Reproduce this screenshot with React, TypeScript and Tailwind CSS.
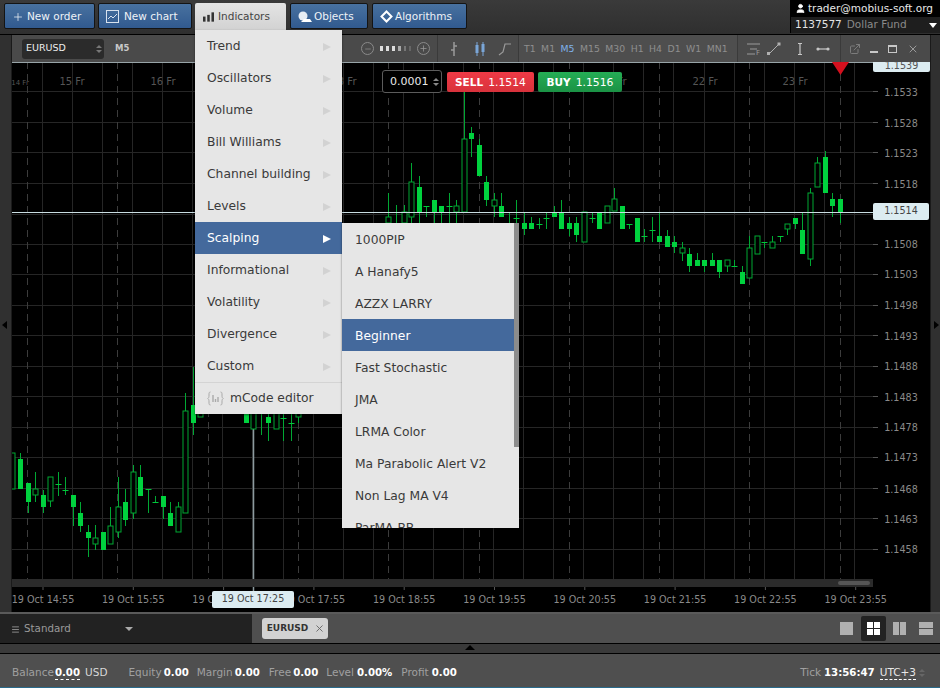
import { Plus, X, ExternalLink, Minus, User, Menu } from 'lucide-react';

const font = "font-['DejaVu_Sans',sans-serif]";

// i, high, low, top, bottom, kind (f = filled, h = hollow, d = doji)
type Candle = [number, number, number, number, number, string];
const candles: Candle[] = [
  [-1, 453, 489, 453, 489, 'h'], [0, 453, 489, 459, 489, 'f'], [1, 483, 513, 483, 502, 'f'], [2, 472, 502, 489, 495, 'h'],
  [3, 490, 513, 495, 507, 'f'], [4, 477, 507, 477, 501, 'h'], [5, 472, 496, 484, 484, 'd'], [6, 477, 495, 490, 490, 'd'],
  [7, 495, 526, 495, 507, 'f'], [8, 502, 532, 513, 526, 'f'], [9, 525, 557, 532, 538, 'f'], [10, 525, 550, 538, 544, 'h'],
  [11, 532, 550, 532, 550, 'f'], [12, 507, 544, 526, 544, 'h'], [13, 477, 538, 507, 532, 'h'], [14, 489, 526, 502, 520, 'f'],
  [15, 465, 519, 472, 513, 'h'], [16, 465, 496, 477, 496, 'f'], [17, 489, 513, 489, 489, 'd'], [18, 496, 503, 502, 502, 'd'],
  [19, 496, 519, 496, 507, 'f'], [20, 502, 526, 513, 526, 'f'], [21, 502, 532, 507, 532, 'h'], [22, 393, 513, 411, 513, 'h'],
  [23, 367, 435, 405, 423, 'f'], [24, 400, 417, 413, 417, 'h'],
  [30, 405, 423, 405, 423, 'f'], [31, 400, 429, 405, 429, 'h'], [32, 400, 435, 405, 418, 'd'], [33, 405, 441, 417, 423, 'f'],
  [34, 400, 429, 405, 429, 'h'], [35, 400, 441, 418, 418, 'd'], [36, 400, 441, 423, 423, 'd'], [37, 400, 423, 405, 417, 'h'],
  [49, 193, 223, 217, 223, 'h'], [50, 205, 223, 223, 223, 'd'], [51, 205, 223, 212, 223, 'h'], [52, 163, 223, 182, 217, 'h'],
  [53, 176, 223, 187, 212, 'f'], [54, 206, 217, 206, 206, 'd'], [55, 200, 223, 200, 212, 'f'], [56, 206, 223, 206, 212, 'f'],
  [57, 193, 223, 206, 206, 'd'], [58, 200, 223, 206, 212, 'h'], [59, 72, 212, 139, 212, 'h'], [60, 127, 157, 133, 139, 'f'],
  [61, 139, 176, 145, 176, 'f'], [62, 176, 206, 182, 200, 'f'], [63, 193, 217, 200, 206, 'h'], [64, 193, 217, 206, 217, 'f'],
  [65, 212, 223, 212, 212, 'd'], [66, 200, 223, 218, 218, 'd'], [67, 212, 235, 223, 229, 'f'], [68, 217, 229, 223, 229, 'f'],
  [69, 218, 229, 224, 224, 'd'], [70, 212, 229, 218, 218, 'd'], [71, 206, 217, 212, 217, 'f'], [72, 200, 229, 212, 229, 'f'],
  [73, 217, 236, 223, 229, 'f'], [74, 217, 242, 223, 235, 'f'], [75, 212, 242, 212, 242, 'h'], [76, 212, 223, 218, 218, 'd'],
  [77, 212, 229, 212, 229, 'f'], [78, 206, 223, 206, 223, 'h'], [79, 188, 211, 199, 211, 'h'], [80, 206, 229, 206, 229, 'f'],
  [81, 224, 229, 224, 224, 'd'], [82, 218, 242, 218, 242, 'f'], [83, 229, 242, 236, 236, 'd'], [84, 217, 242, 230, 230, 'd'],
  [85, 212, 242, 236, 242, 'f'], [86, 230, 247, 236, 247, 'f'], [87, 236, 253, 242, 247, 'f'], [88, 242, 261, 248, 253, 'h'],
  [89, 248, 272, 254, 266, 'f'], [90, 253, 266, 260, 266, 'f'], [91, 260, 272, 260, 266, 'f'], [92, 253, 266, 260, 266, 'f'],
  [93, 260, 278, 260, 272, 'f'], [94, 260, 272, 260, 266, 'h'], [95, 260, 266, 266, 266, 'd'], [96, 266, 284, 272, 284, 'f'],
  [97, 236, 278, 248, 278, 'h'], [98, 236, 254, 236, 254, 'h'], [99, 242, 248, 242, 242, 'd'], [100, 236, 248, 242, 248, 'h'],
  [101, 236, 242, 236, 236, 'd'], [102, 224, 235, 224, 229, 'h'], [103, 218, 229, 218, 224, 'f'], [104, 212, 254, 230, 254, 'f'],
  [105, 188, 266, 193, 259, 'h'], [106, 157, 187, 163, 187, 'h'], [107, 151, 193, 157, 193, 'f'], [108, 193, 217, 199, 206, 'f'],
  [109, 199, 223, 199, 212, 'f'],
];

const prices: [string, number][] = [
  ['1.1533', 92], ['1.1528', 123], ['1.1523', 153], ['1.1518', 184], ['1.1508', 244], ['1.1503', 274], ['1.1498', 305], ['1.1493', 336],
  ['1.1488', 366], ['1.1483', 397], ['1.1478', 427], ['1.1473', 457], ['1.1468', 489], ['1.1463', 519], ['1.1458', 549],
];
const times = ['14:55', '15:55', '16:55', '17:55', '18:55', '19:55', '20:55', '21:55', '22:55', '23:55'];
const dayLabels: [string, number, number][] = [['14 Fr', 20, 7], ['15 Fr', 72, 10], ['16 Fr', 163, 10], ['18 Fr', 344, 10], ['21 Fr', 614, 10], ['22 Fr', 705, 10], ['23 Fr', 795, 10]];
const tfs = ['T1', 'M1', 'M5', 'M15', 'M30', 'H1', 'H4', 'D1', 'W1', 'MN1'];
const indicators = ['Trend', 'Oscillators', 'Volume', 'Bill Williams', 'Channel building', 'Levels', 'Scalping', 'Informational', 'Volatility', 'Divergence', 'Custom'];
const scalping = ['1000PIP', 'A Hanafy5', 'AZZX LARRY', 'Beginner', 'Fast Stochastic', 'JMA', 'LRMA Color', 'Ma Parabolic Alert V2', 'Non Lag MA V4', 'ParMA BB'];

const Chart = () => (
  <svg width="918" height="550" viewBox="12 62 918 550" className="block">
    <rect x="12" y="62" width="918" height="550" fill="#000" />
    {Array.from({ length: 28 }, (_, k) => Math.round(42 + k * 30.07) + 0.5).map((x) => (
      <line key={x} x1={x} x2={x} y1="62" y2="579" stroke="#262626" strokeWidth="1" />
    ))}
    {[91, 122, 152, 183, 214, 244, 274, 305, 335, 366, 396, 427, 457, 488, 518, 549].map((y) => (
      <g key={y}>
        <line x1="12" x2="873" y1={y + 0.5} y2={y + 0.5} stroke="#262626" strokeWidth="1" />
        <line x1="873" x2="878" y1={y + 0.5} y2={y + 0.5} stroke="#555" strokeWidth="1" />
      </g>
    ))}
    {Array.from({ length: 10 }, (_, k) => Math.round(27 + k * 90.3) + 0.5).map((x) => (
      <line key={x} x1={x} x2={x} y1="62" y2="579" stroke="#3c3c3c" strokeWidth="1" strokeDasharray="7 5" />
    ))}
    {dayLabels.map(([d, x, size]) => (
      <text key={d} x={x} y="85" textAnchor="middle" fontSize={size} fill="#555" fontFamily="DejaVu Sans">{d}</text>
    ))}
    <line x1="12" x2="873" y1="62.5" y2="62.5" stroke="#98a4a8" />
    <line x1="253.5" x2="253.5" y1="62" y2="592" stroke="#8c9a9e" strokeWidth="1.5" />
    {candles.map(([i, hi, lo, top, bot, kind]) => {
      const x = Math.round(20 + i * 7.52) + 0.5;
      return (
        <g key={i}>
          <line x1={x} x2={x} y1={hi} y2={lo} stroke="#00a833" />
          {kind === 'f' && <rect x={x - 2.5} y={top} width="5" height={bot - top} fill="#00d23e" />}
          {kind === 'h' && <rect x={x - 2.5} y={top} width="5" height={bot - top} fill="#000" stroke="#00a833" />}
          {kind === 'd' && <line x1={x - 3} x2={x + 3} y1={top + 0.5} y2={top + 0.5} stroke="#00c83a" />}
        </g>
      );
    })}
    <line x1="12" x2="873" y1="212.5" y2="212.5" stroke="#c9dde2" strokeWidth="1" />
    <polygon points="832,62 849,62 840.5,75" fill="#d4101e" />
    <rect x="12" y="579" width="861" height="8" fill="#2b2b2b" />
    <rect x="838" y="581" width="32" height="4" rx="2" fill="#555" />
    {times.map((t, k) => (
      <g key={t}>
        <line x1={43 + k * 90.3} x2={43 + k * 90.3} y1="587" y2="590" stroke="#555" />
        <text x={43 + k * 90.3} y="603" textAnchor="middle" fontSize="9.6" fill="#8a8a8a" fontFamily="DejaVu Sans">19 Oct {t}</text>
      </g>
    ))}
    {prices.map(([p, y]) => (
      <text key={p} x="901" y={y + 3.5} textAnchor="middle" fontSize="9.6" fill="#8a8a8a" fontFamily="DejaVu Sans">{p}</text>
    ))}
  </svg>
);

const NavButton = ({ w, icon, label, gap }: { w: string; icon: React.ReactNode; label: string; gap: string }) => (
  <div className={`flex h-[26px] items-center rounded-[2px] border border-[#141414] bg-linear-to-b from-[#48719f] to-[#315a8f] pt-px text-[10.5px] text-[#eef2f6] ${w}`}>
    {icon}
    <span className={gap}>{label}</span>
  </div>
);

const Sep = () => <div className="h-full w-px bg-[#3a3a3a]" />;

const CandleIcon = () => (
  <svg width="12" height="16" viewBox="0 0 12 16">
    <path d="M3 1v14M9 1v14" stroke="#7aa6d8" />
    <rect x="1.5" y="4" width="3" height="8" fill="#7aa6d8" />
    <rect x="7.5" y="3" width="3" height="8" fill="#7aa6d8" />
  </svg>
);

export default function App() {
  return (
    <div className={`relative flex h-[688px] w-[940px] flex-col overflow-hidden bg-[#333] ${font}`}>
      {/* Top bar */}
      <header className="flex h-[34px] items-start bg-linear-to-b from-[#3a3a3a] to-[#2f2f2f] pl-1">
        <div className="mt-[3px] flex gap-[3px]">
          <NavButton w="w-[91px] pl-[7px]" gap="ml-[3px]" label="New order" icon={<Plus size={12} color="#eef2f6" strokeWidth={1.5} />} />
          <NavButton w="w-[94px] pl-[7px]" gap="ml-[5px]" label="New chart" icon={
            <svg width="13" height="13" viewBox="0 0 13 13" fill="none" stroke="#d8e2ee"><rect x="0.5" y="0.5" width="12" height="12" /><path d="M2 9l3-3 2 2 4-4" /></svg>
          } />
          <div className="w-[91px] shrink-0" />
          <NavButton w="w-[78px] ml-px pl-[7px]" gap="ml-[2px]" label="Objects" icon={
            <svg width="14" height="13" viewBox="0 0 14 13"><circle cx="5" cy="6" r="4.5" fill="#e8eef4" /><path d="M3 12l3-3h6l2 3z" fill="#fff" /></svg>
          } />
          <NavButton w="w-[95px] ml-px pl-[7px]" gap="ml-[2px]" label="Algorithms" icon={
            <svg width="13" height="13" viewBox="0 0 13 13" fill="none" stroke="#fff" strokeWidth="2"><path d="M6.5 1.5l5 5-5 5-5-5z" /></svg>
          } />
        </div>
        <div className="ml-auto flex h-[33px] w-[150px] flex-col bg-black text-[11px]">
          <div className="flex h-[17px] items-center justify-end gap-[2px] pr-[7px] text-[#e8e8e8]">
            <User size={11} fill="#fff" color="#fff" />
            <span className="text-[10.5px]">trader@mobius-soft.org</span>
          </div>
          <div className="ml-px flex h-[16px] items-center bg-[#1e1e1e] pl-1 text-[10.5px]">
            <span className="text-[#e4e4e4]">1137577</span>
            <span className="ml-[5px] text-[#8a8a8a]">Dollar Fund</span>
            <span className="ml-auto mr-[3px] h-0 w-0 border-x-[4px] border-t-[5px] border-x-transparent border-t-white" />
          </div>
        </div>
      </header>
      <div className="h-px bg-black" />

      <div className="flex h-[577px]">
        <div className="relative w-[12px] border-r border-[#1a1a1a] bg-[#303030]">
          <span className="absolute left-[2px] top-[286px] h-0 w-0 border-y-[4px] border-r-[5px] border-y-transparent border-r-black" />
        </div>

        <div className="relative w-[918px]">
          {/* Chart toolbar */}
          <div className="flex h-[27px] items-center bg-[#4a4a4a] text-[9.3px] text-[#8e8e8e]">
            <div className="flex h-full w-[343px] items-center pl-[10px]">
              <div className="flex h-[20px] w-[82px] items-center justify-between rounded-[3px] bg-[#2b2b2b] pl-[4px] pr-[2px] text-[9.5px] text-[#eee]">
                EURUSD
                <span className="flex flex-col gap-[2px]">
                  <span className="h-0 w-0 border-x-[3px] border-b-[3px] border-x-transparent border-b-[#777]" />
                  <span className="h-0 w-0 border-x-[3px] border-t-[3px] border-x-transparent border-t-[#777]" />
                </span>
              </div>
              <span className="ml-[11px] text-[8.5px] font-bold text-[#c8c8c8]">M5</span>
            </div>
            <div className="flex h-full w-[82px] items-center pl-[6px]">
              <span className="flex h-[13px] w-[13px] items-center justify-center rounded-full border border-[#8a8a8a]"><Minus size={8} color="#999" /></span>
              <span className="mx-[6px] flex h-[6px] w-[31px] items-center gap-[3px]">
                <i className="h-[5px] w-[3px] bg-[#ddd]" /><i className="h-[5px] w-[3px] bg-[#ddd]" /><i className="h-[5px] w-[3px] bg-[#ddd]" /><i className="h-[5px] w-[3px] bg-[#aaa]" /><i className="h-[5px] w-[2px] bg-[#777]" /><i className="h-[5px] w-[2px] bg-[#666]" />
              </span>
              <span className="flex h-[13px] w-[13px] items-center justify-center rounded-full border border-[#8a8a8a]"><Plus size={9} color="#999" /></span>
            </div>
            <Sep />
            <div className="flex h-full w-[80px] items-center pl-[11px]">
              <svg width="10" height="16" viewBox="0 0 10 16" stroke="#9a9a9a" strokeWidth="1.5" fill="none"><path d="M5 1v14M2 9h3M5 5h3" /></svg>
              <span className="ml-[15px] flex"><CandleIcon /></span>
              <span className="ml-[12px] flex">
                <svg width="14" height="14" viewBox="0 0 14 14" stroke="#9a9a9a" strokeWidth="1.2" fill="none"><path d="M1 13l4-3 2-8h6" /></svg>
              </span>
            </div>
            <Sep />
            <div className="flex h-full w-[218px] items-center gap-[5.5px] bg-[#4e4e4e] pl-[5px]">
              {tfs.map((t) => (
                <span key={t} className={t === 'M5' ? 'text-[#7fb2ea]' : ''}>{t}</span>
              ))}
            </div>
            <Sep />
            <div className="flex h-full w-[102px] items-center pl-[9px]">
              <svg width="14" height="14" viewBox="0 0 14 14" stroke="#9a9a9a" fill="none"><path d="M0 2h13M3 7h7M0 12h8" /><text x="9" y="13" fontSize="7" fill="#9a9a9a" stroke="none">F</text></svg>
              <span className="ml-[6px] flex">
                <svg width="14" height="14" viewBox="0 0 14 14" stroke="#b0b0b0" fill="none"><path d="M2 12L12 2" /><rect x="0.5" y="10.5" width="2" height="2" fill="#b0b0b0" /><rect x="11" y="1" width="2" height="2" fill="#b0b0b0" /></svg>
              </span>
              <span className="ml-[15px] flex">
                <svg width="8" height="14" viewBox="0 0 8 14" stroke="#c8c8c8" fill="none" strokeWidth="1.2"><path d="M4 2v10M2 1.5h4M2 12.5h4" /></svg>
              </span>
              <span className="ml-[12px] flex">
                <svg width="14" height="8" viewBox="0 0 14 8" stroke="#c8c8c8" fill="none" strokeWidth="1.2"><path d="M1 4h12" /><circle cx="2" cy="4" r="1" fill="#c8c8c8" /><circle cx="12" cy="4" r="1" fill="#c8c8c8" /></svg>
              </span>
            </div>
            <Sep />
            <div className="flex h-full flex-1 items-center gap-[8px] pl-[8px]">
              <ExternalLink size={12} color="#7c7c7c" />
              <span className="ml-px mt-[6px] h-[2px] w-[8px] bg-[#c8c8c8]" />
              <span className="ml-[2px] h-[8px] w-[9px] border border-t-2 border-[#c8c8c8]" />
              <X size={12} color="#9a9a9a" className="ml-[2px]" />
            </div>
          </div>

          <Chart />

          {/* Chart overlays */}
          <div className="absolute left-[370px] top-[35px] flex h-[23px] w-[60px] items-center justify-between rounded-[3px] border border-[#5c5c5c] bg-black pl-[7px] pr-[2px] pt-px text-[11px] text-[#e8e8e8]">
            0.0001
            <span className="flex flex-col gap-[2px]">
              <span className="h-0 w-0 border-x-[3px] border-b-[3px] border-x-transparent border-b-[#888]" />
              <span className="h-0 w-0 border-x-[3px] border-t-[3px] border-x-transparent border-t-[#888]" />
            </span>
          </div>
          <div className="absolute left-[435px] top-[37px] flex h-[20px] w-[87px] items-center justify-center gap-[5px] rounded-[2px] bg-linear-to-b from-[#ef3a46] to-[#d8323c] pt-[2px] text-[10.8px] text-white">
            <b className="text-[10.5px]">SELL</b> 1.1514
          </div>
          <div className="absolute left-[526px] top-[37px] flex h-[20px] w-[84px] items-center justify-center gap-[5px] rounded-[2px] bg-linear-to-b from-[#25ad55] to-[#1b9245] pt-[2px] text-[10.8px] text-white">
            <b className="text-[10.5px]">BUY</b> 1.1516
          </div>
          <div className="absolute left-[861px] top-[27px] flex h-[10px] w-[57px] items-end justify-center overflow-hidden rounded-b-[2px] bg-[#dcecf1] text-[9.6px] leading-[12px] text-[#555]">1.1539</div>
          <div className="absolute left-[861px] top-[168px] flex h-[17px] w-[56px] items-center justify-center rounded-[2px] bg-[#dcecf1] text-[9.6px] text-[#444]">1.1514</div>
          <div className="absolute left-[200px] top-[556px] flex h-[17px] w-[82px] items-center justify-center rounded-[2px] bg-[#dcecf1] text-[9.6px] text-[#444]">19 Oct 17:25</div>
        </div>

        <div className="relative flex-1 border-l border-[#1a1a1a] bg-[#303030]">
          <span className="absolute right-[1px] top-[286px] h-0 w-0 border-y-[4px] border-l-[5px] border-y-transparent border-l-black" />
        </div>
      </div>

      <div className="h-[2px] bg-[#5a5a5a]" />

      {/* Layout tabs */}
      <div className="flex h-[29px] items-center bg-[#4f4f4f]">
        <div className="flex h-full w-[252px] items-center bg-[#222] pl-[11px] pt-px text-[10.3px] text-[#9a9a9a]">
          <Menu size={9} color="#aaa" />
          <span className="ml-[4px]">Standard</span>
          <span className="ml-[54px] h-0 w-0 border-x-[4px] border-t-[4px] border-x-transparent border-t-[#aaa]" />
        </div>
        <div className="ml-[10px] flex h-[21px] w-[66px] items-center justify-center gap-[6px] rounded-[3px] bg-[#d2d2d2] pl-[2px] text-[9px] font-bold text-[#333]">
          EURUSD <X size={11} color="#666" />
        </div>
        <div className="ml-auto flex items-center pr-[7px]">
          <span className="h-[13px] w-[13px] bg-[#b0b0b0]" />
          <span className="ml-[8px] grid h-[25px] w-[25px] grid-cols-2 gap-px rounded-[2px] bg-[#222] p-[6px]">
            <i className="bg-white" /><i className="bg-white" /><i className="bg-white" /><i className="bg-white" />
          </span>
          <span className="ml-[7px] grid h-[13px] w-[13px] grid-cols-2 gap-px"><i className="bg-[#b0b0b0]" /><i className="bg-[#b0b0b0]" /></span>
          <span className="ml-[13px] grid h-[13px] w-[14px] grid-rows-2 gap-px"><i className="bg-[#b0b0b0]" /><i className="bg-[#b0b0b0]" /></span>
        </div>
      </div>
      <div className="h-px bg-black" />
      <div className="relative h-[9px] bg-[#3a3a3a]">
        <span className="absolute left-[465px] top-[1px] h-0 w-0 border-x-[5px] border-b-[5px] border-x-transparent border-b-black" />
      </div>
      <div className="h-px bg-black" />

      {/* Status bar */}
      <div className="flex h-[33px] items-center bg-[#4f4f4f] pl-[12px] pr-[15px] pt-[4px] text-[10.5px] text-[#a0a0a0]">
        <span>Balance</span>
        <b className="ml-px border-b border-dashed border-white text-[10.2px] leading-[13px] text-white">0.00</b>
        <span className="ml-[5px] text-[#d8d8d8]">USD</span>
        <span className="ml-[21px]">Equity</span><b className="ml-[2px] text-[10.2px] text-white">0.00</b>
        <span className="ml-[8px]">Margin</span><b className="ml-[2px] text-[10.2px] text-white">0.00</b>
        <span className="ml-[9px]">Free</span><b className="ml-[2px] text-[10.2px] text-white">0.00</b>
        <span className="ml-[8px]">Level</span><b className="ml-[3px] text-[10.2px] text-white">0.00%</b>
        <span className="ml-[9px]">Profit</span><b className="ml-[3px] text-[10.2px] text-white">0.00</b>
        <span className="ml-auto">Tick</span><b className="ml-[3px] text-[10.2px] text-white">13:56:47</b>
        <span className="ml-[5px] border-b border-dashed border-white leading-[13px] text-[#e8e8e8]">UTC+3</span>
        <span className="ml-[3px] flex flex-col gap-[2px]">
          <span className="h-0 w-0 border-x-[3px] border-b-[3px] border-x-transparent border-b-[#666]" />
          <span className="h-0 w-0 border-x-[3px] border-t-[3px] border-x-transparent border-t-[#666]" />
        </span>
      </div>
      <div className="h-px bg-[#2a6a8a]" />

      {/* Indicators dropdown */}
      <div className="absolute left-[195px] top-[3px] flex h-[27px] w-[91px] items-center gap-[4px] rounded-t-[2px] bg-linear-to-b from-[#e4e4e4] to-[#d2d2d2] pl-[8px] pt-px text-[10.5px] text-[#444]">
        <svg width="11" height="10" viewBox="0 0 13 11" fill="#333"><rect x="0" y="5" width="3" height="6" /><rect x="5" y="3" width="3" height="8" /><rect x="10" y="0" width="3" height="11" /></svg>
        Indicators
      </div>
      <div className="absolute left-[195px] top-[30px] w-[147px] bg-[#e6e6e6] text-[12.3px] text-[#3a3a3a] shadow-[0_1px_2px_rgba(0,0,0,0.5)]">
        {indicators.map((m) => (
          <div key={m} className={`flex h-[32px] items-center justify-between pl-[12px] pr-[11px] pt-px ${m === 'Scalping' ? 'bg-[#44699c] text-white' : ''}`}>
            {m}
            <span className={`h-0 w-0 border-y-[4px] border-l-[8px] border-y-transparent ${m === 'Scalping' ? 'border-l-white' : 'border-l-[#d2d2d2]'}`} />
          </div>
        ))}
        <div className="h-px bg-[#d4d4d4]" />
        <div className="flex h-[31px] items-center pl-[12px]">
          <svg width="17" height="15" viewBox="0 0 17 15" fill="none" stroke="#aaa" strokeWidth="1">
            <path d="M3.5 1C2 1 2 2 2 4S2 6.5 .8 7.5C2 8.5 2 9 2 11s0 3 1.5 3M13.5 1C15 1 15 2 15 4s0 2.5 1.2 3.5C15 8.5 15 9 15 11s0 3-1.5 3" />
            <path d="M6 4v7M8.5 8v3M11 6v5" strokeWidth="1.4" />
          </svg>
          <span className="ml-[6px]">mCode editor</span>
        </div>
      </div>

      {/* Scalping submenu */}
      <div className="absolute left-[342px] top-[223px] flex h-[305px] w-[177px] overflow-hidden bg-[#e6e6e6] text-[12.3px] text-[#3a3a3a] shadow-[0_1px_2px_rgba(0,0,0,0.5)]">
        <div className="w-[172px]">
          {scalping.map((s) => (
            <div key={s} className={`flex h-[32px] items-center pl-[13px] pt-[2px] ${s === 'Beginner' ? 'bg-[#44699c] text-white' : ''}`}>{s}</div>
          ))}
        </div>
        <div className="h-[224px] w-[5px] bg-[#8c8c8c]" />
      </div>
    </div>
  );
}
